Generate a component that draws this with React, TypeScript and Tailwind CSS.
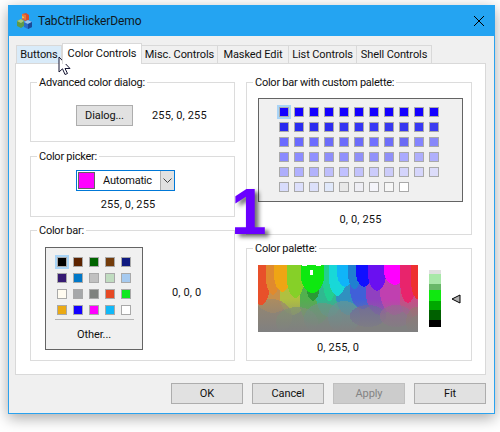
import React from 'react';

const customRows: string[][] = [
  Array(11).fill('#1400ff'),
  ['#2a28ee', '#2a2cf0', '#2c2cee', '#2e2cf0', '#3434f2', '#3434f4', '#3838f6', '#3838f0', '#3636f0', '#3838f4', '#3c3cf0'],
  ['#6a6aff', '#6a6aff', '#6c6cff', '#6c6cfa', '#6c6cfc', '#6c6cfa', '#7070ff', '#6e6efa', '#6a6af4', '#8484ff', '#8888fa'],
  ['#8a8aff', '#8c8cff', '#9090ff', '#8e8efa', '#9090fc', '#9090f8', '#9292fa', '#9090f8', '#aaaaff', '#aeaefc', '#b0b0fc'],
  ['#aeaefc', '#b0b0ff', '#b2b2fc', '#bebefc', '#c0c0ff', '#c2c2fc', '#ccccfc', '#ccccfa', '#d4d4fc', '#d6d6fc', '#dcdcfa'],
  ['#d8dcfc', '#dcdffc', '#dce0fa', '#e0e8fa', '#e8e8e8', '#eeeef4', '#f4f4fa', '#f6f6f6', '#ffffff'],
];

const barRows: string[][] = [
  ['#000000', '#5c2300', '#006400', '#733c0c', '#0f1a80'],
  ['#361a73', '#0078c8', '#c0c0c0', '#c0dcc0', '#a6caf0'],
  ['#fffbf0', '#a6a8aa', '#7f827f', '#e64a25', '#0fe81e'],
  ['#ebaa14', '#1400ff', '#ff00ff', '#10b8f8', '#ffffff'],
];

const tabs = [
  { label: 'Buttons', w: 'w-[46px]', bg: 'bg-[#d9ebf9]' },
  { label: 'Color Controls', w: 'w-[80px]', active: true },
  { label: 'Misc. Controls', w: 'w-[77px]', bg: 'bg-[#f0f0f0]' },
  { label: 'Masked Edit', w: 'w-[72px]', bg: 'bg-[#f0f0f0]' },
  { label: 'List Controls', w: 'w-[69px]', bg: 'bg-[#f0f0f0]' },
  { label: 'Shell Controls', w: 'w-[76px]', bg: 'bg-[#f0f0f0]' },
];

const Swatch = ({ color, selected }: { color: string; selected?: boolean }) => (
  <div
    className={`w-[10px] h-[10px] border border-[#a9a9a9] ${selected ? 'shadow-[0_0_0_2px_#a8d4f7]' : ''}`}
    style={{ backgroundColor: color }}
  />
);

const Group = ({ title, className, children }: { title: string; className: string; children: React.ReactNode }) => (
  <fieldset className={`border border-[#dcdcdc] ${className}`}>
    <legend className="ml-[6px] px-[2px] h-[16px] leading-[18px] tracking-[-0.25px]">{title}</legend>
    {children}
  </fieldset>
);

// saturated drops along the top of the palette: x from, x to, tip y, colour
const drops: [number, number, number, string][] = [
  [-6, 12, 40, '#e8502a'],
  [8, 22, 30, '#e08a2e'],
  [16, 33, 27, '#efa514'],
  [29, 46, 33, '#86d028'],
  [65, 78, 36, '#22cf90'],
  [71, 88, 31, '#18d8d8'],
  [79, 95, 22, '#10b4f8'],
  [90, 103, 24, '#2080d0'],
  [98, 114, 22, '#1010ff'],
  [110, 128, 26, '#6a10f0'],
  [126, 148, 20, '#ff00ff'],
  [142, 158, 38, '#e8246c'],
  [153, 166, 34, '#ee3030'],
];

// paler ones under them
const midDrops: [number, number, number, number, string][] = [
  [-4, 34, 14, 48, '#c8904a'],
  [22, 48, 18, 50, '#b0c040'],
  [42, 72, 22, 60, '#52b04e'],
  [58, 84, 14, 52, '#30b890'],
  [78, 102, 16, 50, '#3090c0'],
  [92, 118, 10, 44, '#4060d8'],
  [108, 136, 12, 50, '#9040c0'],
  [122, 152, 8, 50, '#c040b0'],
  [142, 166, 24, 52, '#c84c88'],
];

const lowDrops: [number, number, number, number, string][] = [
  [-8, 34, 34, 70, '#a08a6a'],
  [18, 60, 42, 72, '#7f9a6e'],
  [46, 84, 38, 70, '#6a9a80'],
  [70, 102, 36, 68, '#5f9a9a'],
  [92, 128, 40, 62, '#6860a8'],
  [122, 154, 40, 62, '#a06098'],
  [148, 170, 42, 72, '#a0706c'],
];

const drop = (a: number, b: number, top: number, tip: number) => {
  const mid = (a + b) / 2;
  const side = top + (tip - top) * 0.4;
  const w = (b - a) * 0.12;
  return `M${a} ${top}L${a} ${side}C${a} ${tip - 4} ${mid - w} ${tip} ${mid} ${tip}C${mid + w} ${tip} ${b} ${tip - 4} ${b} ${side}L${b} ${top}Z`;
};

const Palette = () => (
  <svg width="160" height="67" viewBox="0 0 160 67" shapeRendering="crispEdges" className="block">
    <defs>
      <linearGradient id="fade" x1="0" y1="0" x2="0" y2="1">
        <stop offset="0" stopColor="#808080" stopOpacity="0" />
        <stop offset="1" stopColor="#808080" stopOpacity="1" />
      </linearGradient>
    </defs>
    <rect width="160" height="67" fill="#808080" />
    {midDrops.map(([a, b, t, p, c], i) => (
      <path key={i} d={drop(a, b, t, p)} fill={c} />
    ))}
    {lowDrops.map(([a, b, t, p, c], i) => (
      <ellipse key={i} cx={(a + b) / 2} cy={(t + p) / 2} rx={(b - a) / 2} ry={(p - t) / 2} fill={c} opacity="0.7" />
    ))}
    <rect y="34" width="160" height="33" fill="url(#fade)" />
    {drops.map(([a, b, p, c], i) => (
      <path key={i} d={drop(a, b, 0, p)} fill={c} />
    ))}
    <path d={drop(49, 61, 20, 36)} fill="#2a9a36" />
    <path d={drop(43, 66, 0, 28)} fill="#0ee810" />
    <rect x="44" y="0" width="5" height="1" fill="#fff" />
    <rect x="58" y="0" width="5" height="1" fill="#fff" />
    <rect x="52" y="5" width="3" height="5" fill="#fff" />
  </svg>
);

const AppIcon = () => (
  <svg width="16" height="16" viewBox="0 0 16 16" className="shrink-0">
    <path d="M5 1l4-1 3 2v5l-4 1-3-2z" fill="#d8502c" />
    <path d="M5 1l4 1v5L5 6z" fill="#e8783c" />
    <path d="M5 3l2 1v1H5z" fill="#e8c850" />
    <path d="M0 8l4-2 3 2v5l-3 2-4-2z" fill="#5f9a4a" />
    <path d="M4 6l3 2-3 2-4-2z" fill="#a8c880" />
    <path d="M7 9l4-2 4 2v5l-4 2-4-2z" fill="#2a6cc8" />
    <path d="M11 7l4 2-4 2-4-2z" fill="#9cc4ec" />
    <path d="M11 11l4-2v5l-4 2z" fill="#1a4a98" />
  </svg>
);

export default function App() {
  return (
    <div className="w-[500px] h-[432px] bg-white pt-[5px] pl-[8px] overflow-hidden font-['Roboto',sans-serif] text-[11px] leading-[16px] tracking-[-0.1px] text-[#111] relative">
      <div className="w-[487px] h-[409px] flex flex-col bg-[#f0f0f0] border border-t-0 border-[#2aa2ee] shadow-[0_4px_14px_rgba(0,0,0,0.35)]">
        {/* title bar */}
        <div className="h-[31px] shrink-0 bg-[#24a4f2] flex items-center pl-[8px] pr-[10px] gap-[5px]">
          <AppIcon />
          <span className="flex-1 text-[12px] tracking-[-0.1px] text-[#101820]">TabCtrlFlickerDemo</span>
          <svg width="10" height="10" viewBox="0 0 10 10" stroke="#000" strokeWidth="1">
            <path d="M0 0L10 10M10 0L0 10" />
          </svg>
        </div>

        {/* tabs */}
        <div className="pt-[7px] pl-[6px]">
          <div className="h-[20px] flex items-end pl-[2px]">
            {tabs.map((t) =>
              t.active ? (
                <div key={t.label} className={`${t.w} h-[21px] -mb-px relative z-10 bg-white border border-b-0 border-[#d9d9d9] text-center leading-[19px] whitespace-nowrap`}>
                  {t.label}
                </div>
              ) : (
                <div key={t.label} className={`${t.w} ${t.bg} h-[18px] border border-b-0 border-[#d9d9d9] -ml-px text-center leading-[18px] whitespace-nowrap`}>
                  {t.label}
                </div>
              ),
            )}
          </div>

          <div className="w-[471px] h-[312px] bg-white border border-[#d9d9d9] pt-[10px] pl-[14px] flex gap-[11px]">
            {/* left column */}
            <div className="w-[205px] flex flex-col">
              <Group title="Advanced color dialog:" className="h-[68px]">
                <div className="flex items-center pt-[15px] pl-[45px] gap-[19px]">
                  <button className="w-[57px] h-[21px] bg-[#e1e1e1] border border-[#adadad]">Dialog...</button>
                  <span className="tracking-[0.15px]">255, 0, 255</span>
                </div>
              </Group>
              <Group title="Color picker:" className="h-[69px] mt-[6px]">
                <div className="pt-[6px] pl-[45px]">
                  <div className="w-[99px] h-[21px] border border-[#0078d7] flex items-center pl-[1px]">
                    <div className="w-[17px] h-[17px] bg-[#ff00ff] border border-[#646464]" />
                    <span className="flex-1 text-center tracking-[-0.2px]">Automatic</span>
                    <div className="w-[14px] h-[19px] bg-[#e1e1e1] border-l border-[#adadad] flex items-center justify-center">
                      <svg width="9" height="5" viewBox="0 0 9 5" fill="none" stroke="#444" strokeWidth="1">
                        <path d="M0.5 0.5L4.5 4.5L8.5 0.5" />
                      </svg>
                    </div>
                  </div>
                  <div className="w-[104px] mt-[6px] text-center tracking-[0.15px]">255, 0, 255</div>
                </div>
              </Group>
              <Group title="Color bar:" className="h-[139px] mt-[5px]">
                <div className="flex items-center pt-[9px] pl-[14px]">
                  <div className="w-[98px] h-[103px] bg-[#f0f0f0] border border-[#646464] pt-[9px] flex flex-col items-center">
                    <div className="grid grid-cols-5 gap-[6px]">
                      {barRows.flat().map((c, i) => (
                        <Swatch key={i} color={c} selected={i === 0} />
                      ))}
                    </div>
                    <div className="w-[79px] h-px bg-[#b4b4b4] mt-[4px]" />
                    <span className="mt-[7px]">Other...</span>
                  </div>
                  <span className="ml-[29px] mb-[12px] tracking-[0.15px]">0, 0, 0</span>
                </div>
              </Group>
            </div>

            {/* right column */}
            <div className="w-[226px] flex flex-col">
              <Group title="Color bar with custom palette:" className="h-[161px]">
                <div className="pt-[8px] pl-[11px]">
                  <div className="w-[205px] h-[104px] bg-[#f0f0f0] border border-[#646464] pt-[8px] pl-[20px]">
                    <div className="grid grid-cols-[repeat(11,10px)] gap-[5px]">
                      {customRows.flat().map((c, i) => (
                        <Swatch key={i} color={c} selected={i === 0} />
                      ))}
                    </div>
                  </div>
                  <div className="w-[205px] text-center mt-[10px] tracking-[0.15px]">0, 0, 255</div>
                </div>
              </Group>
              <Group title="Color palette:" className="h-[121px] mt-[5px]">
                <div className="pl-[11px] pt-[9px]">
                  <div className="flex items-center">
                    <Palette />
                    <div className="ml-[11px] w-[12px] flex flex-col">
                      <div className="h-[4px] bg-[#e0e0e0]" />
                      <div className="h-[10px] bg-[#a8e8a8]" />
                      <div className="h-[6px] bg-[#68b868]" />
                      <div className="h-[11px] bg-[#10e810]" />
                      <div className="h-[9px] bg-[#00a800]" />
                      <div className="h-[10px] bg-[#006000]" />
                      <div className="h-[7px] bg-black" />
                    </div>
                    <svg width="10" height="10" viewBox="0 0 10 10" className="ml-[10px]">
                      <path d="M9 1V9L1 5Z" fill="#b0b0b0" stroke="#000" strokeWidth="1" />
                    </svg>
                  </div>
                  <div className="w-[160px] text-center mt-[8px] tracking-[0.15px]">0, 255, 0</div>
                </div>
              </Group>
            </div>
          </div>
        </div>

        {/* bottom buttons */}
        <div className="flex justify-end gap-[9px] pt-[8px] pr-[8px]">
          <button className="w-[72px] h-[21px] bg-[#e1e1e1] border border-[#adadad]">OK</button>
          <button className="w-[72px] h-[21px] bg-[#e1e1e1] border border-[#adadad]">Cancel</button>
          <button className="w-[72px] h-[21px] bg-[#cccccc] border border-[#bfbfbf] text-[#838383]">Apply</button>
          <button className="w-[72px] h-[21px] bg-[#e1e1e1] border border-[#adadad]">Fit</button>
        </div>
      </div>

      {/* annotation over the dialog */}
      <span className="absolute left-[231px] top-[189px] font-['Liberation_Sans',sans-serif] font-bold text-[64px] leading-[46px] tracking-normal text-[#6a00ff] [text-shadow:4px_3px_4px_rgba(0,0,0,0.55)]">
        1
      </span>

      {/* mouse cursor */}
      <svg width="14" height="21" viewBox="0 0 14 21" className="absolute left-[58px] top-[56px]">
        <path d="M1 1V16L4.5 12.8L7 18.5L9.5 17.5L7 12.5H12Z" fill="#fff" stroke="#141432" strokeWidth="1" />
      </svg>
    </div>
  );
}
